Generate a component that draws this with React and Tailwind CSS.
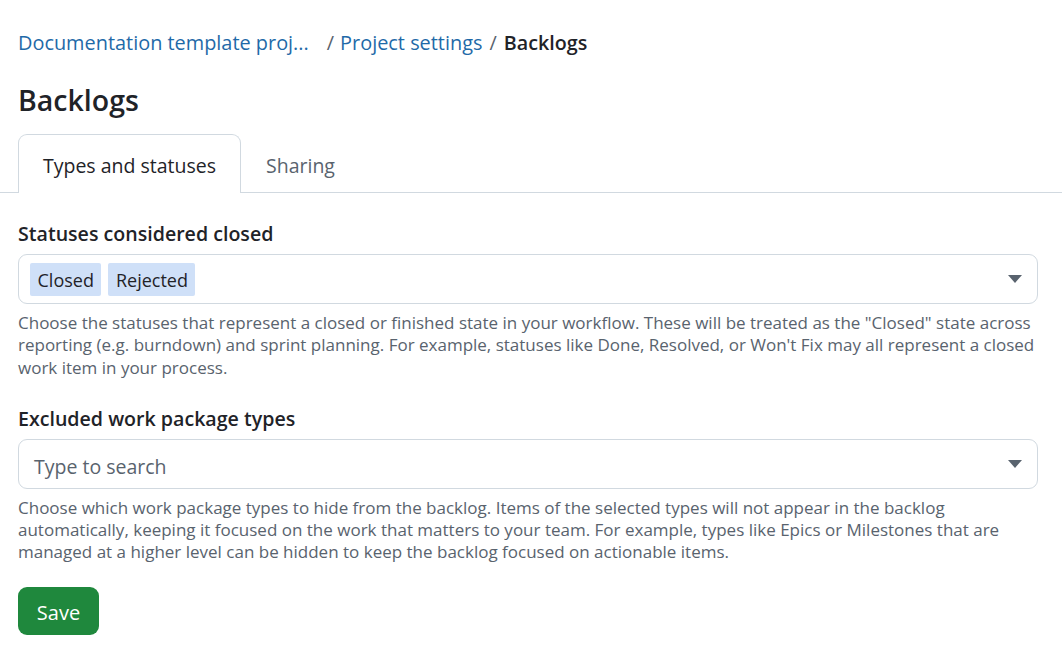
import React from 'react';

const font = "font-['Open_Sans','Noto_Sans',sans-serif]";

const Caret = () => (
  <svg width="14" height="8" viewBox="0 0 14 8" className="shrink-0">
    <path d="M0 0h14L7 8z" fill="#59636e" />
  </svg>
);

const Field = ({ label, children, help }) => (
  <div>
    <label className="block pt-[1px] text-[19.6px] leading-[28px] font-semibold text-[#1f2328]">{label}</label>
    <div className="mt-[6px] h-[50px] border border-[#d1d9e0] rounded-[9px] flex items-center pr-[15px] pl-[11px] bg-white">
      <div className="flex-1 flex items-center gap-[7px]">{children}</div>
      <Caret />
    </div>
    <p className="mt-[8px] text-[17px] leading-[22.3px] text-[#59636e]">{help}</p>
  </div>
);

const Chip = ({ children }) => (
  <span className="h-[33px] px-[7.5px] pt-[2px] flex items-center bg-[#cfe0f8] rounded-[2px] text-[18px] text-[#1f2328]">{children}</span>
);

export default function App() {
  return (
    <div className={`h-[663px] w-[1062px] overflow-hidden bg-white pt-[27px] ${font}`}>
      <nav className="px-[18px] flex items-center text-[19.9px] leading-[32px] text-[#59636e]">
        <a className="text-[#1f6aa8]">Documentation template proj...</a>
        <span className="ml-[18px]">/</span>
        <a className="ml-[6px] text-[#1f6aa8]">Project settings</a>
        <span className="ml-[7px]">/</span>
        <span className="ml-[7px] text-[19.7px] font-semibold text-[#1f2328]">Backlogs</span>
      </nav>
      <h1 className="mt-[21px] px-[18px] text-[28.5px] leading-[40px] font-semibold text-[#1f2328]">Backlogs</h1>
      <div className="mt-[14px] h-[59px] border-b border-[#d1d9e0] flex pl-[18px] text-[19.5px]">
        <div className="h-[59px] w-[223px] pt-[3px] flex items-center justify-center border border-b-0 border-[#d1d9e0] rounded-t-[9px] bg-white text-[#1f2328]">
          Types and statuses
        </div>
        <div className="h-[58px] px-[25px] pt-[5px] flex items-center text-[#59636e]">Sharing</div>
      </div>
      <div className="px-[18px] pr-[24px] mt-[26px] flex flex-col gap-[25px]">
        <Field
          label="Statuses considered closed"
          help={`Choose the statuses that represent a closed or finished state in your workflow. These will be treated as the "Closed" state across reporting (e.g. burndown) and sprint planning. For example, statuses like Done, Resolved, or Won't Fix may all represent a closed work item in your process.`}
        >
          <Chip>Closed</Chip>
          <Chip>Rejected</Chip>
        </Field>
        <Field
          label="Excluded work package types"
          help="Choose which work package types to hide from the backlog. Items of the selected types will not appear in the backlog automatically, keeping it focused on the work that matters to your team. For example, types like Epics or Milestones that are managed at a higher level can be hidden to keep the backlog focused on actionable items."
        >
          <span className="pl-[4px] pt-[5px] text-[19.5px] text-[#59636e]">Type to search</span>
        </Field>
      </div>
      <button className="ml-[18px] mt-[23px] w-[81px] h-[48px] pt-[5px] rounded-[9px] bg-[#1f883d] text-white text-[20px]">Save</button>
    </div>
  );
}
